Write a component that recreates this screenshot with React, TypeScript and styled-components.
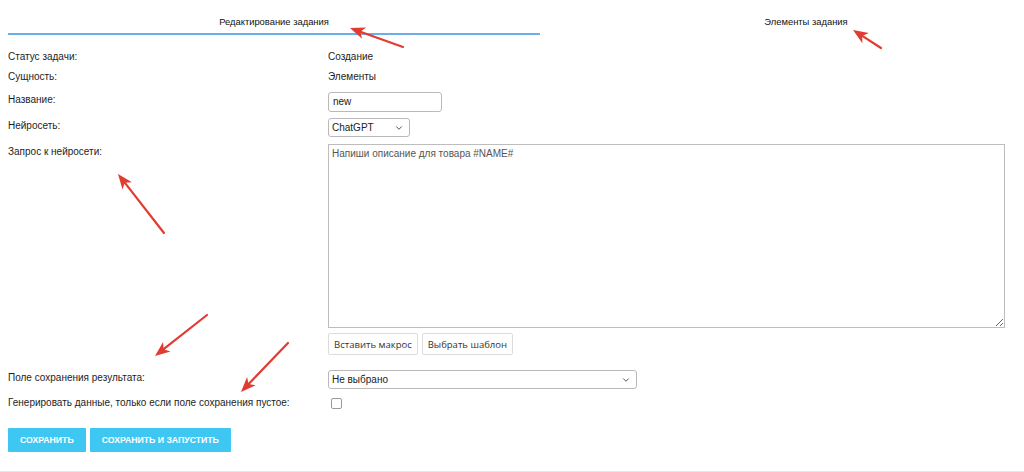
import styled, { createGlobalStyle } from 'styled-components';
import { ChevronDown } from 'lucide-react';

const GlobalStyle = createGlobalStyle`
  html, body {
    margin: 0;
    padding: 0;
    background: #fff;
    overflow: hidden;
  }
  body {
    font-family: "Liberation Sans", Arial, sans-serif;
    font-size: 10px;
    color: #222;
  }
`;

type Arrow = { x1: number; y1: number; x2: number; y2: number };

// annotation arrows drawn over the screenshot (tail -> tip)
const arrows: Arrow[] = [
  { x1: 403, y1: 47, x2: 350, y2: 28 },
  { x1: 881, y1: 48, x2: 853, y2: 30 },
  { x1: 164, y1: 233, x2: 118, y2: 174 },
  { x1: 207, y1: 315, x2: 155, y2: 356 },
  { x1: 288, y1: 343, x2: 241, y2: 392 },
];

const ArrowMark = ({ x1, y1, x2, y2 }: Arrow) => {
  const dx = x2 - x1;
  const dy = y2 - y1;
  const len = Math.hypot(dx, dy);
  const ux = dx / len;
  const uy = dy / len;
  const headLen = 15;
  const headHalf = 6;
  const bx = x2 - ux * headLen;
  const by = y2 - uy * headLen;
  const mx = x2 - ux * (headLen - 4);
  const my = y2 - uy * (headLen - 4);
  const pts = [
    `${x2},${y2}`,
    `${bx - uy * headHalf},${by + ux * headHalf}`,
    `${mx},${my}`,
    `${bx + uy * headHalf},${by - ux * headHalf}`,
  ].join(' ');
  return (
    <g>
      <line x1={x1} y1={y1} x2={mx} y2={my} stroke="#e23b32" strokeWidth={2.2} strokeLinecap="round" />
      <polygon points={pts} fill="#e23b32" />
    </g>
  );
};

type DropdownProps = { width: number; value: string };

const Dropdown = ({ width, value }: DropdownProps) => (
  <S.SelectWrap $w={width}>
    <S.Select defaultValue={value}>
      <option>{value}</option>
    </S.Select>
    <S.Chevron size={10} strokeWidth={2} />
  </S.SelectWrap>
);

const App = () => {
  return (
    <>
      <GlobalStyle />
      <S.Page>
        <S.Tabs>
          <S.Tab $active>Редактирование задания</S.Tab>
          <S.Tab>Элементы задания</S.Tab>
        </S.Tabs>

        <S.Form>
          <S.Row $h={20}>
            <S.Label>Статус задачи:</S.Label>
            <S.Value>Создание</S.Value>
          </S.Row>
          <S.Row $h={20}>
            <S.Label>Сущность:</S.Label>
            <S.Value>Элементы</S.Value>
          </S.Row>
          <S.Row $h={26}>
            <S.Label>Название:</S.Label>
            <S.TextInput defaultValue="new" />
          </S.Row>
          <S.Row $h={26}>
            <S.Label>Нейросеть:</S.Label>
            <Dropdown width={82} value="ChatGPT" />
          </S.Row>
          <S.TopRow>
            <S.Label $top>Запрос к нейросети:</S.Label>
            <S.Field>
              <S.TextArea defaultValue="Напиши описание для товара #NAME#" />
              <S.Tools>
                <S.ToolButton>Вставить макрос</S.ToolButton>
                <S.ToolButton>Выбрать шаблон</S.ToolButton>
              </S.Tools>
            </S.Field>
          </S.TopRow>
          <S.Row $h={26}>
            <S.Label>Поле сохранения результата:</S.Label>
            <Dropdown width={309} value="Не выбрано" />
          </S.Row>
          <S.Row $h={24}>
            <S.Label>Генерировать данные, только если поле сохранения пустое:</S.Label>
            <S.Check type="checkbox" />
          </S.Row>
        </S.Form>

        <S.Actions>
          <S.SaveButton>Сохранить</S.SaveButton>
          <S.SaveButton>Сохранить и запустить</S.SaveButton>
        </S.Actions>
      </S.Page>
      <S.Footer />

      <S.Overlay viewBox="0 0 1024 472" width={1024} height={472}>
        {arrows.map((a, i) => (
          <ArrowMark key={i} {...a} />
        ))}
      </S.Overlay>
    </>
  );
};

const S = {
  Page: styled.div`
    padding: 0 8px;
  `,
  Tabs: styled.div`
    display: flex;
    width: 1064px;
  `,
  Tab: styled.div<{ $active?: boolean }>`
    width: 532px;
    box-sizing: border-box;
    text-align: center;
    padding: 16px 0 5px;
    line-height: 12px;
    font-size: 9.4px;
    color: #111;
    border-bottom: 2px solid ${(p) => (p.$active ? '#6aaeea' : 'transparent')};
  `,
  Form: styled.div`
    margin-top: 12px;
    display: flex;
    flex-direction: column;
  `,
  Row: styled.div<{ $h: number }>`
    display: grid;
    grid-template-columns: 320px 1fr;
    align-items: center;
    height: ${(p) => p.$h}px;
  `,
  TopRow: styled.div`
    display: grid;
    grid-template-columns: 320px 1fr;
    align-items: start;
    margin-top: 5px;
    margin-bottom: 10px;
  `,
  Label: styled.div<{ $top?: boolean }>`
    font-size: 10px;
    line-height: 14px;
    color: #1d1d1d;
    ${(p) => (p.$top ? 'padding-top: 1px;' : '')}
  `,
  Value: styled.div`
    font-size: 10px;
    line-height: 14px;
    color: #1d1d1d;
  `,
  TextInput: styled.input`
    width: 114px;
    height: 20px;
    box-sizing: border-box;
    border: 1px solid #b9b9b9;
    border-radius: 3px;
    padding: 0 4px;
    font-family: "Liberation Sans", Arial, sans-serif;
    font-size: 10px;
    color: #222;
    margin-top: 3px;
  `,
  SelectWrap: styled.div<{ $w: number }>`
    position: relative;
    width: ${(p) => p.$w}px;
    height: 19px;
    margin-top: 2px;
  `,
  Select: styled.select`
    appearance: none;
    width: 100%;
    height: 100%;
    box-sizing: border-box;
    border: 1px solid #b9b9b9;
    border-radius: 3px;
    background: #fff;
    padding: 0 3px;
    font-family: "Liberation Sans", Arial, sans-serif;
    font-size: 10px;
    color: #222;
  `,
  Chevron: styled(ChevronDown)`
    position: absolute;
    right: 6px;
    top: 5px;
    color: #333;
    pointer-events: none;
  `,
  Field: styled.div`
    display: flex;
    flex-direction: column;
    gap: 5px;
  `,
  TextArea: styled.textarea`
    width: 677px;
    height: 184px;
    box-sizing: border-box;
    border: 1px solid #bdbdbd;
    border-radius: 0;
    padding: 3px 3px;
    font-family: "Liberation Sans", Arial, sans-serif;
    font-size: 10px;
    color: #555;
    resize: both;
    display: block;
  `,
  Tools: styled.div`
    display: flex;
    gap: 4px;
  `,
  ToolButton: styled.button`
    height: 22px;
    padding: 0 5px;
    background: #fff;
    border: 1px solid #dcdcdc;
    border-radius: 2px;
    font-family: "Open Sans", sans-serif;
    font-size: 9.5px;
    color: #333;
  `,
  Check: styled.input`
    appearance: none;
    width: 11px;
    height: 11px;
    box-sizing: border-box;
    margin: 0 0 0 3px;
    border: 1px solid #9a9a9a;
    border-radius: 2px;
    background: #fff;
  `,
  Actions: styled.div`
    display: flex;
    gap: 4px;
    margin-top: 13px;
  `,
  SaveButton: styled.button`
    height: 24px;
    padding: 0 12px;
    border: none;
    border-radius: 1px;
    background: #3fc7f3;
    color: #fff;
    font-family: "Liberation Sans", Arial, sans-serif;
    font-weight: bold;
    font-size: 8.7px;
    text-transform: uppercase;
  `,
  Footer: styled.div`
    margin-top: 19px;
    border-top: 2px solid #e3e6ea;
    height: 10px;
  `,
  Overlay: styled.svg`
    position: absolute;
    top: 0;
    left: 0;
    pointer-events: none;
  `,
};

export default App;
